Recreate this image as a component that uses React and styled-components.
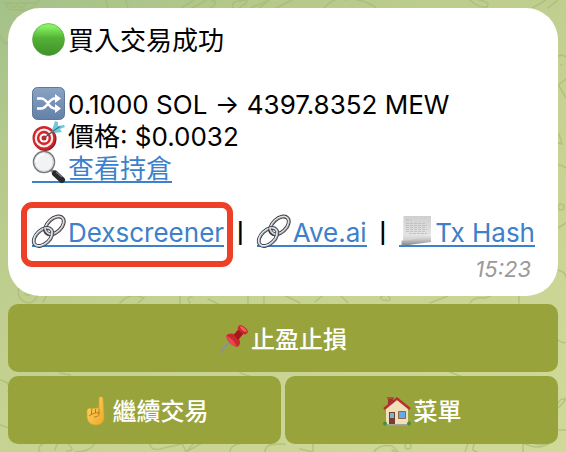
import React from "react";
import styled, { createGlobalStyle } from "styled-components";

const Global = createGlobalStyle`
  * { box-sizing: border-box; }
  html { height: 100%; }
  body {
    margin: 0;
    min-height: 100%;
    font-family: Inter, "Noto Sans CJK TC", sans-serif;
    background: linear-gradient(150deg, #a3c18a 0%, #b7ca8b 22%, #c6d292 55%, #d0d998 100%);
  }
`;

const Page = styled.main`
  position: relative;
  min-height: 100vh;
  padding: 8px;
  display: flex;
  flex-direction: column;
  gap: 8px;
`;

const Wallpaper = styled.svg`
  position: absolute;
  inset: 0;
  width: 100%;
  height: 100%;
  fill: none;
  stroke: #a3b86a;
  stroke-opacity: 0.6;
  stroke-width: 1.5;
  stroke-linecap: round;
`;

const Bubble = styled.article`
  position: relative;
  background: #fff;
  border-radius: 32px;
  padding: 17px 23px 15px 24px;
  color: #000;
  font-size: 26px;
  font-weight: 400;
  line-height: 32px;
`;

const Line = styled.div`
  display: flex;
  align-items: center;
  height: 32px;
  gap: 3px;
  white-space: pre;
`;

const Spacer = styled.div`
  height: 32px;
`;

const Icon = styled.svg`
  width: ${(p) => p.$size || 33}px;
  height: ${(p) => p.$size || 33}px;
  margin-bottom: 3px;
  flex: none;
  overflow: visible;
`;

const Link = styled.a`
  position: relative;
  display: flex;
  align-items: center;
  height: 32px;
  gap: 3px;
  color: #3d80cb;
  text-decoration: none;
  background: linear-gradient(#3d80cb, #3d80cb) 0 28px / 100% 2px no-repeat;
`;

const Links = styled.nav`
  display: flex;
  align-items: center;
  justify-content: space-between;
  height: 32px;
`;

const Separator = styled.span`
  font-size: 20px;
  font-weight: 600;
  line-height: 32px;
`;

const Highlight = styled.span`
  position: absolute;
  inset: -15px -9px -18px -11px;
  border: 6px solid #ec4128;
  border-radius: 11px;
  pointer-events: none;
`;

const Time = styled.time`
  display: block;
  margin-top: 8px;
  padding-right: 4px;
  text-align: right;
  font-size: 22px;
  line-height: 24px;
  font-style: italic;
  color: #999;
`;

const Keyboard = styled.div`
  position: relative;
  display: grid;
  grid-template-columns: 1fr 1fr;
  gap: 4px;
`;

const Key = styled.button`
  grid-column: ${(p) => (p.$wide ? "1 / -1" : "auto")};
  display: flex;
  align-items: center;
  justify-content: center;
  gap: 2px;
  height: 68px;
  padding: 4px 6px 0;
  border: 0;
  border-radius: 10px;
  background: #98a33c;
  color: #fff;
  font: 500 24px/32px Inter, "Noto Sans CJK TC", sans-serif;
  cursor: pointer;
`;

const GreenCircle = () => (
  <Icon viewBox="0 0 33 33" aria-hidden="true">
    <defs>
      <linearGradient id="green" x2="0" y2="1">
        <stop offset="0" stopColor="#8df765" />
        <stop offset=".12" stopColor="#85ec5f" />
        <stop offset=".45" stopColor="#52b336" />
        <stop offset="1" stopColor="#428f2b" />
      </linearGradient>
    </defs>
    <circle cx="16.5" cy="16.5" r="16" fill="url(#green)" stroke="#4aa033" strokeWidth=".6" />
  </Icon>
);

const Shuffle = () => (
  <Icon viewBox="0 0 33 33" aria-hidden="true">
    <defs>
      <linearGradient id="shuffle" x2="0" y2="1">
        <stop offset="0" stopColor="#8ba3c4" />
        <stop offset="1" stopColor="#6380a8" />
      </linearGradient>
    </defs>
    <rect x=".5" y=".5" width="32" height="32" rx="5" fill="url(#shuffle)" stroke="#5f7897" />
    <g fill="none" stroke="#fff" strokeWidth="2.4">
      <path d="M5 11.500h4c7 0 7 10 14 10h2M5 21.500h4c7 0 7-10 14-10h2" />
    </g>
    <path d="M23 7l6 4.500-6 4.500zM23 17l6 4.500-6 4.500z" fill="#fff" />
  </Icon>
);

const Target = () => (
  <Icon viewBox="0 0 33 33" aria-hidden="true">
    <ellipse cx="13" cy="20" rx="11.500" ry="12" fill="#8f1719" />
    <ellipse cx="12" cy="19" rx="11.500" ry="12" fill="#cf2428" />
    <ellipse cx="12" cy="19" rx="9.300" ry="9.400" fill="#f6eeee" />
    <ellipse cx="12" cy="19" rx="7.100" ry="7.200" fill="#d3272b" />
    <ellipse cx="12" cy="19" rx="4.600" ry="4.600" fill="#fff" />
    <ellipse cx="12" cy="19" rx="2.500" ry="2.500" fill="#c82328" />
    <path d="M12 19L24 10" stroke="#575960" strokeWidth="1.500" />
    <path d="M20 11l3-9 3 1v4l6-1 1 2-5 2 2 3-7 1z" fill="#72c9d8" />
    <path d="M19 13.500l9-6" stroke="#2f8497" strokeWidth="1.300" />
  </Icon>
);

const Magnifier = () => (
  <Icon viewBox="0 0 33 33" aria-hidden="true">
    <path d="M19 19l5 4" stroke="#888" strokeWidth="3" />
    <path d="M23 22.500l7 6.500" stroke="#29292b" strokeWidth="6" strokeLinecap="round" />
    <path d="M24 21l6 5" stroke="#77787b" strokeWidth="1.200" />
    <circle cx="12" cy="11" r="10.500" fill="#f2f3f4" stroke="#77797b" strokeWidth="1.500" />
    <circle cx="12" cy="11" r="9.200" fill="none" stroke="#d6d8da" />
    <path d="M4 11a8 8 0 0 1 8-8" fill="none" stroke="#fff" strokeWidth="2" />
  </Icon>
);

const Chain = () => (
  <Icon viewBox="0 0 33 33" aria-hidden="true">
    <g fill="none">
      <g transform="translate(22.500 10.500) rotate(-43)">
        <ellipse rx="11" ry="6.800" stroke="#43383b" strokeWidth="3.800" />
        <ellipse rx="11" ry="6.800" stroke="#a4a6af" strokeWidth="2" />
        <ellipse cy="-.4" rx="11" ry="6.800" stroke="#eef0f3" strokeWidth=".9" />
      </g>
      <g transform="translate(11 22) rotate(-43)">
        <ellipse rx="11" ry="6.800" stroke="#3d424b" strokeWidth="3.800" />
        <ellipse rx="11" ry="6.800" stroke="#a6b0bd" strokeWidth="2" />
        <ellipse cy="-.4" rx="11" ry="6.800" stroke="#f3f6f9" strokeWidth=".9" />
      </g>
      <path d="M13 13.500c0 3 2 5 5 6" stroke="#43383b" strokeWidth="3.800" />
      <path d="M13 13c0 3 2 5 5.500 6.500" stroke="#d3d5da" strokeWidth="1.800" />
    </g>
  </Icon>
);

const Scroll = () => (
  <Icon viewBox="0 0 33 33" aria-hidden="true">
    <defs>
      <linearGradient id="sheet" x2="0" y2="1">
        <stop offset="0" stopColor="#cfcfcf" />
        <stop offset=".7" stopColor="#e4e4e4" />
        <stop offset="1" stopColor="#c4c4c4" />
      </linearGradient>
      <linearGradient id="roll" x2="0" y2="1">
        <stop offset="0" stopColor="#f2f2f2" />
        <stop offset=".5" stopColor="#c5c5c5" />
        <stop offset="1" stopColor="#858585" />
      </linearGradient>
    </defs>
    <path d="M4.500 1H32v22L4 28z" fill="url(#sheet)" />
    <path d="M7 5h5M7 8.500h20M7 10.500h21M7 12.500h19M7 14.500h21M7 16.500h20M10 18.500h18" stroke="#b4b4b4" strokeWidth=".7" strokeDasharray="3 1" />
    <path d="M2.500 25.500C12 26 22 22 32 19v8C22 28 12 30 2.500 30.500z" fill="url(#roll)" />
  </Icon>
);

const Pin = () => (
  <Icon $size={30} viewBox="0 0 30 30" aria-hidden="true">
    <path d="M1 29L11 17" stroke="#8494a5" strokeWidth="1.800" strokeLinecap="round" />
    <path d="M7 12c2-3 6-3 8-2l4-4c-1-2 0-4 2-5 3 0 8 4 8 7-1 2-3 3-5 2l-4 5c2 3 1 7-2 8C13 22 8 17 7 12z" fill="#c9282c" />
    <path d="M7 12c3 0 8 4 11 11-5-1-10-6-11-11z" fill="#e6474a" />
    <path d="M19 6l5 4-5 6-4-5z" fill="#a5181c" />
    <path d="M21 2c3 0 6 3 7 6-3 0-7-3-7-6z" fill="#ef6262" />
  </Icon>
);

const Finger = () => (
  <Icon $size={30} viewBox="0 0 30 30" aria-hidden="true">
    <defs>
      <linearGradient id="skin" x2="1" y2="1">
        <stop offset="0" stopColor="#ffd95c" />
        <stop offset="1" stopColor="#eda82d" />
      </linearGradient>
    </defs>
    <path d="M18 3c0-3 4-3 4 0l1 18c0 5-3 8-8 8-6 0-9-4-9-9v-5c0-3 4-4 5-1 1-3 4-2 4-1 1-2 3-1 3 0z" fill="url(#skin)" stroke="#e0a02e" strokeWidth=".6" />
    <path d="M10.500 14v5M14.500 13v4M8 20c3-2 7-4 10-3 1 2-2 4-5 4M18 13v5" fill="none" stroke="#bd7620" strokeWidth="1" />
  </Icon>
);

const House = () => (
  <Icon $size={30} viewBox="0 0 30 30" aria-hidden="true">
    <path d="M6 1h5v9H6z" fill="#9d342d" />
    <path d="M5 1h7v2H5z" fill="#b94c40" />
    <path d="M4 12L15 3l11 9v16H4z" fill="#f1dfba" />
    <path d="M2 13L15 2.500l13 10.500" fill="none" stroke="#b62f30" strokeWidth="2.500" />
    <path d="M7 16h6v12H7z" fill="#73402c" />
    <path d="M8 17h4v5H8z" fill="#76b3dd" />
    <path d="M16.500 15.500h7v7h-7z" fill="#65aae2" stroke="#87694f" />
    <path d="M4 28h22v1.500H4z" fill="#a5a5a0" />
    <circle cx="3" cy="27.500" r="2" fill="#4c8c36" />
    <circle cx="27" cy="27.500" r="2" fill="#4c8c36" />
  </Icon>
);

export default function App() {
  return (
    <>
      <Global />
      <Page>
        <Wallpaper viewBox="0 0 566 452" preserveAspectRatio="xMidYMin slice" aria-hidden="true">
          <path d="M3 3h27q8 0 10-3M7 4q-1 6 6 6h14q8-2 10-8M10 5q2 5 7 0q3 5 9 0M106 0l2 8M126 0l2 8M181 8l13-8M192 8l15-8M213 2q-3-3 1-2 4 4-4 8M233 8q-2-6 5-7 12-2 8 2l-7 5M251 8l18-8-10 8M276 8l16-8M324 8q10-12 23-8M357 0q10 1 19 8M470 0q8 8 17 7 4-5-8-7M532 8l14-8M548 8l10-8M0 35q2 8 8 9" />
          <path d="M18 290a10 10 0 1 1 10 13q-10-2-10-13m7-1h1m4-1h1m-6 6q4 3 7-2M40 292q10 0 3 10M120 303q10-12 24-5l-6 5M180 296v8M190 303q-4-6 2-6M208 299l12 6M248 296v8M264 303v-7M280 293l20 10M315 302l8-7h17l8 8M385 295q-8 2-2 5 12 2 4-5M430 303l18-7M470 303q3-6 15-5 9-3 15-8M519 294v9M558 270q8 2 8 8" />
          <circle cx="561" cy="207" r="3" />
          <path d="M558 56q5-2 8 1M561 65h1M558 85l8-6M559 86q6 10 7 12M559 134l3 10-4-1M558 165q5 0 8 3M558 228l8-5M558 340q5 4 8 2M0 380q12 2 8 12M0 425q15 3 20 18M44 443q-8 4-4 9M55 450q3-12 12-7 10 8 0 8M75 452q15 0 20-9M150 443q0 8 10 6l25-6M182 443l4 9 8-9M186 452l16-9M230 452q0-8 15-9M265 452q0-8 12-8h8M313 443v9l-13-3M374 452q5-8 18-6 12 10 0 4" />
          <circle cx="408" cy="446" r="3" />
          <path d="M465 452l3-9M475 443q-5 8 2 9M523 452v-9q16 8 27 0M533 443q10 5 20-3M558 408q12-12 6-9-5 0-6 5M558 430h8M60 373l10 2M240 373l12 4M450 372l15 6" />
        </Wallpaper>
        <Bubble>
          <Line><GreenCircle />買入交易成功</Line>
          <Spacer />
          <Line><Shuffle />0.1000 SOL → 4397.8352 MEW</Line>
          <Line><Target />價格: $0.0032</Line>
          <Line><Link href="#position"><Magnifier />查看持倉</Link></Line>
          <Spacer />
          <Links>
            <Link href="#dexscreener"><Chain />Dexscreener<Highlight /></Link>
            <Separator>|</Separator>
            <Link href="#ave"><Chain />Ave.ai</Link>
            <Separator>|</Separator>
            <Link href="#tx"><Scroll />Tx Hash</Link>
          </Links>
          <Time>15:23</Time>
        </Bubble>
        <Keyboard>
          <Key $wide type="button"><Pin />止盈止損</Key>
          <Key type="button"><Finger />繼續交易</Key>
          <Key type="button"><House />菜單</Key>
        </Keyboard>
      </Page>
    </>
  );
}
